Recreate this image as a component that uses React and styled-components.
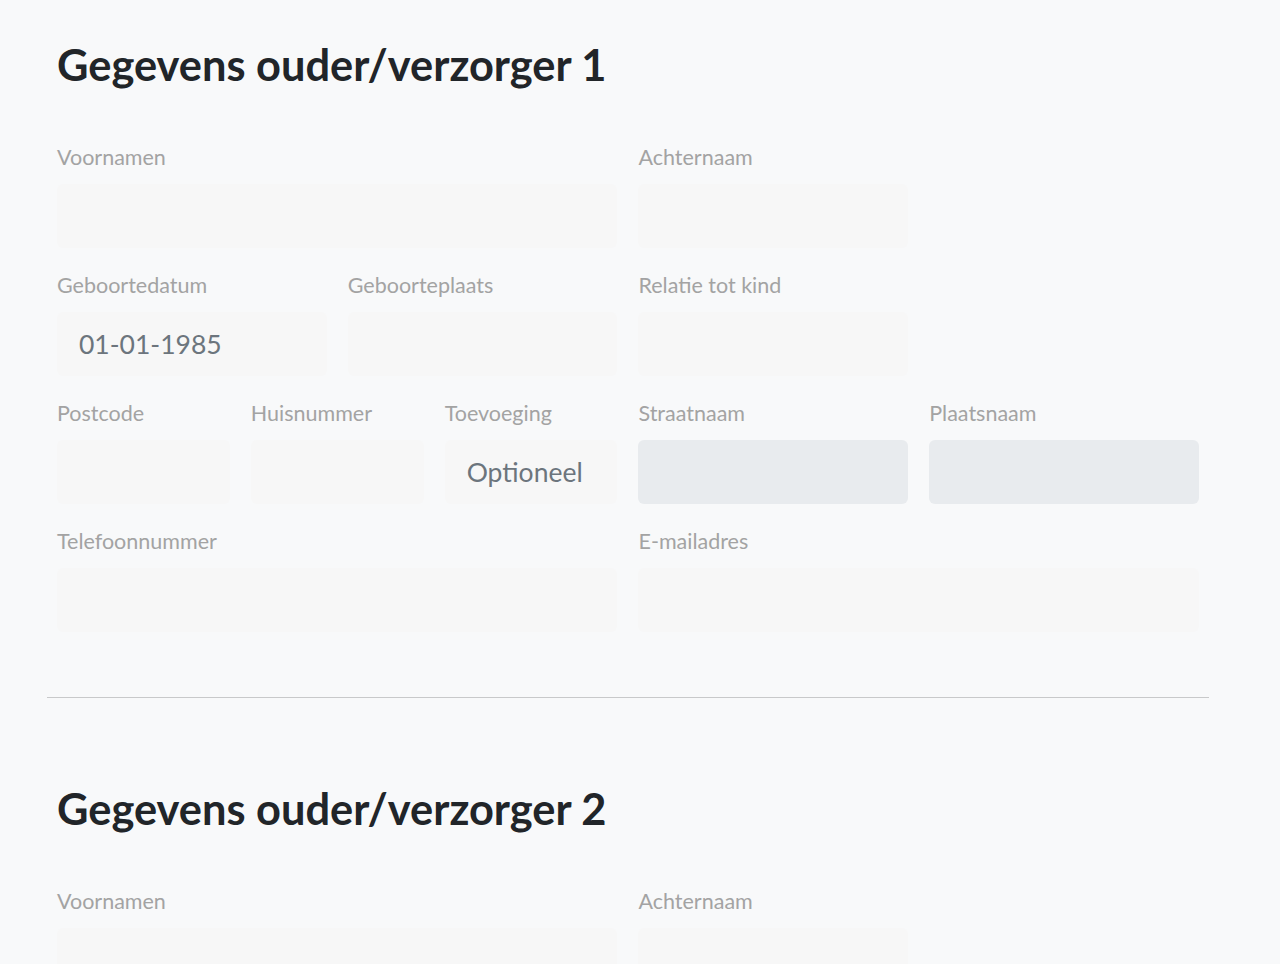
import React from "react";
import styled, { createGlobalStyle } from "styled-components";

const GlobalStyle = createGlobalStyle`
    body {
        margin: 0;
        background-color: #f8f9fa;
        font-family: Lato, "Noto Sans", sans-serif;
    }
`

// every row starts with a field that has `start` set
const fields = [
    { label: "Voornamen", span: 6, start: true },
    { label: "Achternaam", span: 3 },
    { label: "Geboortedatum", span: 3, start: true, placeholder: "01-01-1985" },
    { label: "Geboorteplaats", span: 3 },
    { label: "Relatie tot kind", span: 3 },
    { label: "Postcode", span: 2, start: true },
    { label: "Huisnummer", span: 2 },
    { label: "Toevoeging", span: 2, placeholder: "Optioneel" },
    { label: "Straatnaam", span: 3, disabled: true },
    { label: "Plaatsnaam", span: 3, disabled: true },
    { label: "Telefoonnummer", span: 6, start: true },
    { label: "E-mailadres", span: 6 },
]

function ParentSection({ number }) {
    return (
        <Section>
            <Title>Gegevens ouder/verzorger {number}</Title>
            <FormGrid>
                {fields.map((f) => (
                    <Field key={f.label} $span={f.span} $start={f.start}>
                        <Label>{f.label}</Label>
                        <Input placeholder={f.placeholder} disabled={f.disabled} />
                    </Field>
                ))}
            </FormGrid>
        </Section>
    )
}

function App() {
    return (
        <Page>
            <GlobalStyle />
            <ParentSection number={1} />
            <Divider />
            <ParentSection number={2} />
        </Page>
    )
}

const Page = styled.div`
    width: 1162px;
    padding: 0 0 40px 47px;
`

const Section = styled.section`
    padding: 38px 10px 0;
`

const Title = styled.h2`
    margin: 0 0 52px;
    font-size: 43.4px;
    line-height: 1.2;
    font-weight: 700;
    color: #212529;
`

const FormGrid = styled.div`
    display: grid;
    grid-template-columns: repeat(12, 1fr);
    column-gap: 21px;
    row-gap: 22px;
`

const Field = styled.div`
    grid-column: ${(p) => (p.$start ? "1 / " : "")}span ${(p) => p.$span};
    display: flex;
    flex-direction: column;
    gap: 12px;
`

const Label = styled.label`
    font-size: 21.5px;
    line-height: 30px;
    color: #a3a3a3;
`

const Input = styled.input`
    box-sizing: border-box;
    height: 64px;
    width: 100%;
    padding: 0 22px;
    border: none;
    border-radius: 6px;
    background-color: #f7f7f7;
    font-family: Lato, "Noto Sans", sans-serif;
    font-size: 26.5px;
    color: #495057;
    outline: none;

    &::placeholder {
        color: #6c757d;
    }

    &:disabled {
        background-color: #e8ebee;
    }
`

const Divider = styled.hr`
    margin: 65px 0 46px;
    border: none;
    border-top: 1px solid #c8c9ca;
`

export default App;
